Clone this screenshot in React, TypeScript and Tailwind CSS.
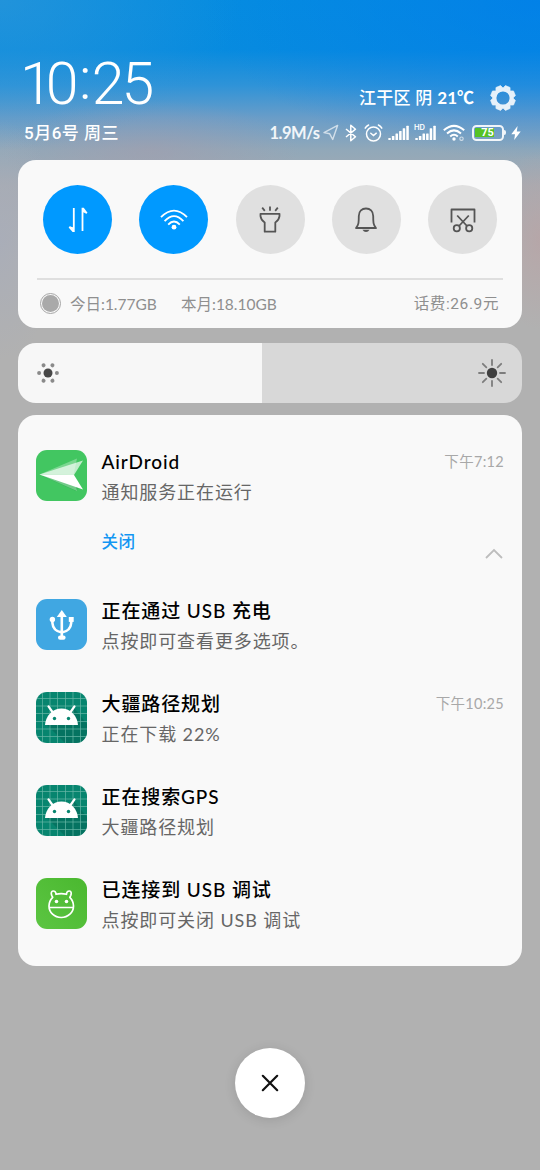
import type { ReactNode } from "react";

const CJK = "font-['Lato','Noto_Sans_CJK_SC',sans-serif]";

function Signal({ hd = false }: { hd?: boolean }) {
  const tops = [13, 11, 8.5, 6, 3.3, 0.8];
  return (
    <svg width="22" height="18" viewBox="0 0 22 18" fill="#fff" className="overflow-visible">
      {tops.map((t, i) => {
        const top = hd && i < 4 ? Math.max(t, 8.5) : t;
        return <rect key={i} x={0.3 + i * 3.6} y={top + 1} width="2.5" height={15 - top} rx="0.5" />;
      })}
      {hd && (
        <text x="-1" y="6" fontSize="7.5" fontWeight="600" fontFamily="Inter, sans-serif">
          HD
        </text>
      )}
    </svg>
  );
}

function StatusRow() {
  return (
    <div className="flex h-[20px] items-center pr-px text-white/90">
      <span className="w-[53px] whitespace-nowrap font-['Lato'] text-[16.5px] font-bold leading-[20px] tracking-[-0.5px]">1.9M/s</span>
      <svg width="16" height="17" viewBox="0 0 16 17" fill="none" stroke="#fff" strokeOpacity=".65" strokeWidth="1.4" strokeLinejoin="round">
        <path d="M14.6 1.4 1 8.6 6.7 9.8 9.7 15.5Z" />
      </svg>
      <svg width="12" height="18" viewBox="0 0 12 18" fill="none" stroke="#fff" strokeWidth="1.5" strokeLinejoin="round" className="ml-[6px]">
        <path d="M1 5 10.5 12.8 5.8 16.8V1.2L10.5 5.2 1 13" />
      </svg>
      <svg width="19" height="18" viewBox="0 0 19 18" fill="none" stroke="#fff" strokeWidth="1.5" strokeLinecap="round" className="ml-[7px]">
        <circle cx="9.5" cy="10" r="7" />
        <path d="M6.8 9.2 9.5 11.5 12.3 9.2M1.2 4.2Q2.3 2 4.6 1M17.8 4.2Q16.7 2 14.4 1" />
      </svg>
      <div className="ml-[5px] flex"><Signal /></div>
      <div className="ml-[5px] flex"><Signal hd /></div>
      <svg width="23" height="18" viewBox="0 0 23 18" fill="none" stroke="#fff" strokeWidth="2" className="ml-[6px]">
        <path d="M.8 6.3Q11 -2.5 21.2 6.3M4 9.4Q11 3.3 18 9.4M7.2 12.4Q11 9 14.8 12.4" />
        <circle cx="11" cy="15" r="1.7" fill="#fff" stroke="none" />
        <circle cx="18.5" cy="14.7" r="1.7" strokeWidth="1.1" strokeOpacity=".65" />
      </svg>
      <div className="ml-[6px] flex h-[16px] w-[32px] items-center justify-center rounded-[4.5px] border-2 border-white/90 p-[1.5px]">
        <div className="flex h-full w-full items-center justify-center bg-[linear-gradient(90deg,#55c226_0_75%,transparent_75%)]">
          <span className="font-['Roboto'] text-[11px] font-bold leading-none text-white">75</span>
        </div>
      </div>
      <div className="ml-[0.5px] h-[5px] w-[2px] rounded-r bg-white/90" />
      <svg width="10" height="16" viewBox="0 0 10 16" fill="#fff" className="ml-[5px]">
        <path d="M6.6 1 .3 9.2H4L3.2 15 9.7 6.4H5.8Z" />
      </svg>
    </div>
  );
}

function Gear() {
  return (
    <svg width="28" height="28" viewBox="-14 -14 28 28" className="ml-[15px]" opacity=".88">
      <circle r="8.6" fill="none" stroke="#fff" strokeWidth="4" />
      {[0, 45, 90, 135, 180, 225, 270, 315].map((a) => (
        <path key={a} d="M-3.6 -9.8 -2.5 -12.4H2.5L3.6 -9.8Z" fill="#fff" stroke="#fff" strokeWidth=".6" strokeLinejoin="round" transform={`rotate(${a + 22.5})`} />
      ))}
    </svg>
  );
}

function Header() {
  return (
    <header className="flex h-[160px] flex-col px-[18px] text-white">
      <div className="flex h-[119px] items-end justify-between">
        <div className="h-[71px] whitespace-nowrap pl-[2px] font-['Roboto'] text-[59px] font-light leading-[71px]">
          <span className="tracking-[-7px]">1</span>
          <span className="tracking-[0.5px]">0</span>
          <span className="relative -top-[5px] tracking-[0.5px]">:</span>
          <span className="tracking-[-3px]">25</span>
        </div>
        <div className="flex h-[43px] items-center pr-[5px]">
          <span className={`${CJK} whitespace-nowrap text-[17px] font-medium leading-[24px] tracking-[0.3px]`}>
            江干区 阴 <span className="font-bold tracking-normal">21℃</span>
          </span>
          <Gear />
        </div>
      </div>
      <div className="flex h-[27px] items-center justify-between pl-[6px]">
        <span className="whitespace-nowrap font-['Roboto','Noto_Sans_CJK_SC',sans-serif] text-[17px] font-medium leading-[24px] tracking-[0.5px]">5月6号 周三</span>
        <StatusRow />
      </div>
    </header>
  );
}

function Toggle({ on = false, children }: { on?: boolean; children: ReactNode }) {
  return (
    <button className={`flex size-[69px] items-center justify-center rounded-full ${on ? "bg-[#0099ff]" : "bg-[#e0e0e0]"}`}>
      <svg width="30" height="30" viewBox="-15 -15 30 30" fill="none" stroke={on ? "#fff" : "#555"} strokeWidth="1.8" strokeLinejoin="round">
        {children}
      </svg>
    </button>
  );
}

function QuickPanel() {
  return (
    <section className="flex h-[168px] flex-col rounded-[18px] bg-[#f9f9f9] px-[19px]">
      <div className="flex h-[118px] items-center justify-between px-[6px] pt-px">
        <Toggle on>
          <path d="M-4.2 -12V11H-5L-8.7 6.8M4.5 11V-11.3H5.3L8.8 -6.8" strokeLinejoin="miter" />
          <path d="M-4.2 11V7.5L-8.700 6.300ZM4.500 -11.300V-8L8.800 -6.300Z" fill="#fff" stroke="none" />
        </Toggle>
        <Toggle on>
          <path d="M-13 -2.8Q0 -16 13 -2.8M-9.4 1.2Q0 -9 9.4 1.2M-5.8 4.6Q0 -1.6 5.8 4.6" />
          <circle cy="7.2" r="2.4" fill="#fff" stroke="none" />
        </Toggle>
        <Toggle>
          <path d="M-9.5 -6.2H9.5V-3.8Q9 .3 5.3 2.5V11.7H-5.3V2.5Q-9 .3 -9.5 -3.8ZM0 -13.5V-9.2M-7.8 -12.3-5.2 -9.2M7.8 -12.3 5.2 -9.2" />
        </Toggle>
        <Toggle>
          <path d="M-10 8C-7.2 4.8 -7.2 2 -7.2 -4C-7.2 -9 -4 -11.5 0 -11.5S7.2 -9 7.2 -4C7.2 2 7.2 4.8 10 8Z" />
          <path d="M-3.5 9.8H3.5Q2.2 12 0 12T-3.5 9.8Z" fill="#555" stroke="none" />
        </Toggle>
        <Toggle>
          <path d="M-11.5 2.5V-10.5H11.5V2.5M-5.8 -4.5 4 6M5.8 -4.5-4 6" />
          <circle cx="-6.2" cy="8.3" r="3.1" />
          <circle cx="6.2" cy="8.3" r="3.1" />
        </Toggle>
      </div>
      <div className="h-[2px] bg-[#dfdfdf]" />
      <div className={`${CJK} flex h-[47px] items-center pl-[3px] pr-[4px] text-[15.5px] leading-[24px] text-[#8f8f8f]`}>
        <span className="flex size-[21px] items-center justify-center rounded-full border border-[#a6a6a6]">
          <span className="size-[17px] rounded-full bg-[#a9a9a9]" />
        </span>
        <span className="ml-[9px] w-[111px] whitespace-nowrap">今日:1.77GB</span>
        <span className="whitespace-nowrap">本月:18.10GB</span>
        <span className="ml-auto whitespace-nowrap font-['Roboto','Noto_Sans_CJK_SC',sans-serif] text-[15.5px] tracking-[0.6px]">话费:26.9元</span>
      </div>
    </section>
  );
}

function Brightness() {
  return (
    <section className="mt-[15px] flex h-[60px] items-center justify-between rounded-[18px] bg-[linear-gradient(90deg,#f7f7f7_0_244.5px,#d8d8d8_244.5px)] pl-[18px] pr-[15px]">
      <svg width="24" height="24" viewBox="-12 -12 24 24" fill="#8a8a8a">
        <circle r="4.5" fill="#484848" />
        {[0, 60, 120, 180, 240, 300].map((a) => (
          <circle key={a} cx="8.9" r="2" transform={`rotate(${a})`} />
        ))}
      </svg>
      <svg width="30" height="30" viewBox="-15 -15 30 30" stroke="#7d7d7d" strokeWidth="1.8" strokeLinecap="round">
        <circle r="5.2" fill="#404040" stroke="none" />
        {[0, 45, 90, 135, 180, 225, 270, 315].map((a) => (
          <path key={a} d="M8 0H13" transform={`rotate(${a})`} />
        ))}
      </svg>
    </section>
  );
}

function AirDroidIcon() {
  return (
    <svg viewBox="0 0 51 51" className="size-[51px] rounded-[11px] bg-[#42c661]">
      <path d="M4 25 40 41 44 35Z" fill="#2ba94d" opacity=".6" />
      <path d="M3.5 24.5 41 8.5 37.5 25 41 41Z" fill="#fff" opacity=".3" />
      <path d="M3.5 24.5 47 10.5 38 25Z" fill="#fff" opacity=".68" />
      <path d="M3.5 24.5 38 25 47 39.5Z" fill="#fff" />
    </svg>
  );
}

function UsbIcon() {
  return (
    <svg viewBox="0 0 51 51" className="size-[51px] rounded-[11px] bg-[#40a7e2]" fill="none" stroke="#fff" strokeWidth="2.6">
      <path d="M25.800 16V39M16.400 21V24Q17 32 25.800 33.500Q34.600 32 35.200 24V21" />
      <path d="M25.800 11 30.800 18H20.800Z" fill="#fff" stroke="none" />
      <circle cx="16.400" cy="20.500" r="2.700" fill="#fff" stroke="none" />
      <rect x="32.800" y="18" width="4.900" height="4.900" fill="#fff" stroke="none" />
      <rect x="22" y="36.500" width="7.600" height="4.300" rx="2.100" fill="#fff" stroke="none" />
    </svg>
  );
}

function AndroidIcon() {
  return (
    <svg viewBox="0 0 51 51" className="size-[51px] rounded-[11px] bg-[#07856f]">
      <path d="M10 32 29 51H51V32L38 16Z" fill="#056e5c" opacity=".75" />
      <path d="M6.500 0V51M14 0V51M21.500 0V51M29.500 0V51M37 0V51M44.500 0V51M0 6.500H51M0 14H51M0 21.500H51M0 29.500H51M0 37H51M0 44.500H51" stroke="#69b8a8" strokeWidth=".7" />
      <path d="M9 33C9.500 24 16.500 16.500 25.500 16.500S41.500 24 42 33Z" fill="#fff" />
      <path d="M12.500 14.300 17.500 21.500M38.500 14.300 33.500 21.500" stroke="#fff" strokeWidth="2.200" strokeLinecap="round" />
      <circle cx="18.500" cy="26.500" r="1.700" fill="#07856f" />
      <circle cx="32.500" cy="26.500" r="1.700" fill="#07856f" />
    </svg>
  );
}

function DebugIcon() {
  return (
    <svg viewBox="0 0 51 51" className="size-[51px] rounded-[11px] bg-linear-to-tr from-[#5cc542] to-[#4ab82f]" fill="none" stroke="#fff" strokeWidth="1.700">
      <path d="M20 16.300Q25.200 14.800 30.500 16.300C30.500 11.500 37 12 34.800 17.300L33.800 19.300Q37.500 23 37.500 28C37.500 34.500 32 39.500 25.200 39.500S13 34.500 13 28Q13 23 16.700 19.300L15.700 17.300C13.500 12 20 11.500 20 16.300Z" strokeLinejoin="round" />
      <path d="M13 29.500H37.500" />
      <circle cx="20.500" cy="23.500" r="1.800" fill="#fff" stroke="none" />
      <circle cx="30.500" cy="23.500" r="1.800" fill="#fff" stroke="none" />
    </svg>
  );
}

type NoticeProps = { icon: ReactNode; title: string; text: string; time?: string };

function Notice({ icon, title, text, time }: NoticeProps) {
  return (
    <article className="flex h-[93px]">
      {icon}
      <div className={`${CJK} ml-[14.5px] flex flex-1 flex-col whitespace-nowrap`}>
        <div className="flex h-[24px] items-center justify-between">
          <h2 className="text-[19px] font-medium leading-[24px] tracking-[0.9px] text-black">{title}</h2>
          {time && <time className="text-[14.500px] leading-[24px] tracking-[0.3px] text-[#a8a8a8]">{time}</time>}
        </div>
        <p className="mt-[6px] text-[18px] leading-[24px] tracking-[0.9px] text-[#666]">{text}</p>
      </div>
    </article>
  );
}

export default function App() {
  return (
    <main className="h-[1170px] w-[540px] overflow-hidden bg-[#b1b1b1] bg-[radial-gradient(ellipse_150px_50px_at_150px_150px,rgba(166,155,170,0.5),transparent),radial-gradient(ellipse_50px_90px_at_540px_240px,rgba(184,164,166,0.8),transparent),radial-gradient(ellipse_60px_120px_at_0px_240px,rgba(168,173,186,0.8),transparent),radial-gradient(ellipse_340px_160px_at_540px_0px,rgba(0,122,236,0.6),transparent),radial-gradient(ellipse_240px_150px_at_0px_0px,rgba(52,152,215,0.6),transparent),linear-gradient(180deg,#058ce0_0px,#078bdf_50px,#2e93d8_85px,#6a9dc8_118px,#91a8b9_150px,#a6abb2_185px,#b1b1b1_260px)]">
      <Header />
      <div className="flex flex-col px-[18px]">
        <QuickPanel />
        <Brightness />
        <section className="mt-[12px] h-[551px] rounded-[18px] bg-[#f9f9f9] px-[18px] pt-[35px]">
          <div className="h-[149px]">
            <Notice icon={<AirDroidIcon />} title="AirDroid" text="通知服务正在运行" time="下午7:12" />
            <div className="-mt-[19px] flex items-center justify-between pl-[65.5px] pr-px">
              <button className={`${CJK} text-[16.500px] font-medium leading-[24px] tracking-[0.5px] text-[#1296f3]`}>关闭</button>
              <svg width="18" height="12" viewBox="0 0 18 12" fill="none" stroke="#bdbdbd" strokeWidth="1.800" className="mt-[24px]">
                <path d="M1 10 9 2 17 10" />
              </svg>
            </div>
          </div>
          <Notice icon={<UsbIcon />} title="正在通过 USB 充电" text="点按即可查看更多选项。" />
          <Notice icon={<AndroidIcon />} title="大疆路径规划" text="正在下载 22%" time="下午10:25" />
          <Notice icon={<AndroidIcon />} title="正在搜索GPS" text="大疆路径规划" />
          <Notice icon={<DebugIcon />} title="已连接到 USB 调试" text="点按即可关闭 USB 调试" />
        </section>
        <button className="mx-auto mt-[82px] flex size-[70px] items-center justify-center rounded-full bg-white shadow-[0_2px_12px_rgba(0,0,0,0.12)]">
          <svg width="18" height="18" viewBox="0 0 18 18" stroke="#111" strokeWidth="2.200" strokeLinecap="round">
            <path d="M1.800 1.800 16.200 16.200M16.200 1.800 1.800 16.200" />
          </svg>
        </button>
      </div>
    </main>
  );
}
